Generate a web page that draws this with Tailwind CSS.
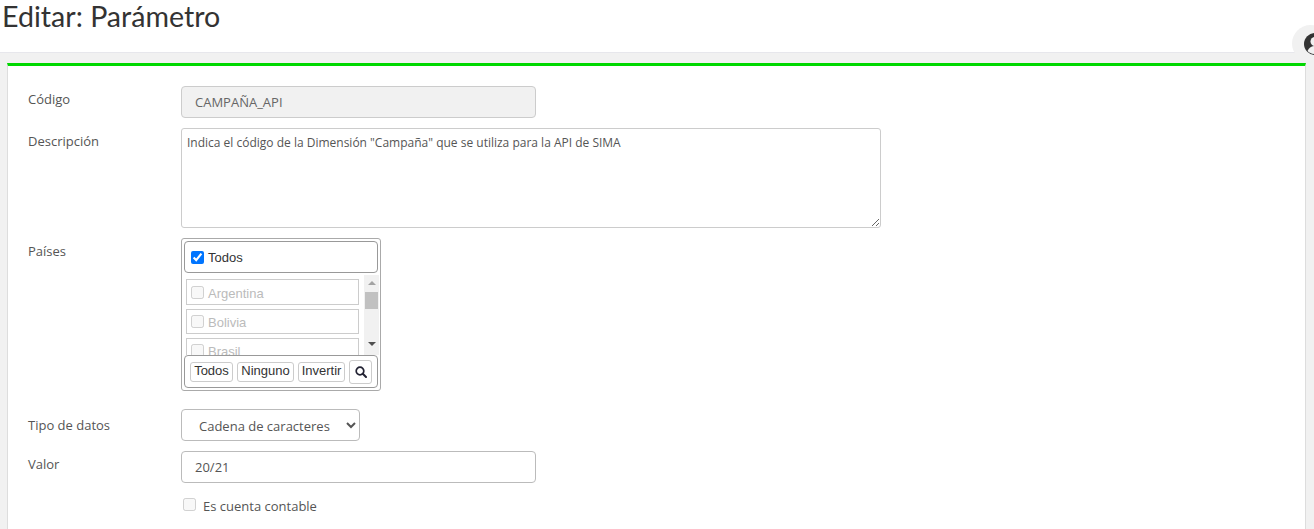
<!DOCTYPE html>
<html lang="es">
<head>
  <meta charset="UTF-8" />
  <title>Editar: Parámetro</title>
  <script src="https://cdn.jsdelivr.net/npm/@tailwindcss/browser@4"></script>
</head>
<body class="relative h-[529px] overflow-hidden bg-[#f1f1f1] font-['Open_Sans',sans-serif] text-[13px] text-[#555]">
  <!-- page title -->
  <header class="h-[53px] bg-white border-b border-[#e7e7ec] pl-[2px]">
    <h1 class="font-['Lato',sans-serif] text-[28.600px] leading-[32px] text-[#333]">Editar: Parámetro</h1>
  </header>

  <!-- user bubble -->
  <div class="absolute left-[1292px] top-[25px] w-[37px] h-[37px] rounded-full bg-[#f1f1f1] overflow-hidden">
    <svg class="absolute left-[12px] top-[8px] w-[22px] h-[22px]" viewBox="0 0 22 22">
      <circle cx="11" cy="11" r="11" fill="#333" />
      <circle cx="11" cy="8.5" r="4.5" fill="#f1f1f1" />
      <path d="M3.5 18c1.5-3.5 4-5 7.500-5s6 1.500 7.500 5c-2 2-4.500 3-7.500 3s-5.500-1-7.500-3z" fill="#f1f1f1" />
    </svg>
  </div>

  <main class="ml-[7px] mr-[8px] mt-[10px] h-[470px] bg-white border-x border-[#ddd] border-t-[3px] border-t-[#00d800] pl-[20px] pt-[20px]">
    <div class="flex h-[32px]">
      <label class="w-[153px] pt-[4px]">Código</label>
      <input type="text" disabled value="CAMPAÑA_API" class="w-[355px] h-[32px] px-[13px] text-[13px] text-[#666] bg-[#f1f1f1] border border-[#ccc] rounded-[4px]" />
    </div>

    <div class="flex mt-[10px] h-[100px]">
      <label class="w-[153px] pt-[4px]">Descripción</label>
      <textarea class="w-[700px] h-[100px] px-[5px] py-[5px] font-['Open_Sans',sans-serif] text-[12px] leading-[17px] text-[#555] border border-[#ccc] rounded-[3px]">Indica el código de la Dimensión "Campaña" que se utiliza para la API de SIMA</textarea>
    </div>

    <div class="flex mt-[10px]">
      <label class="w-[153px] pt-[4px]">Países</label>
      <div class="w-[200px] h-[153px] p-[2px] border border-[#aaa] rounded-[3px] font-['Liberation_Sans',sans-serif] text-[13px] text-[#333]">
        <div class="flex items-center h-[32px] pl-[6px] border border-[#999] rounded-[4px]">
          <input type="checkbox" checked class="w-[13px] h-[13px] accent-[#0075ff]" />
          <span class="ml-[4px] pt-[1px]">Todos</span>
        </div>
        <div class="flex h-[80px] mt-[2px]">
          <div class="w-[180px] h-[80px] shrink-0 overflow-hidden pl-[2px] pt-[4px] text-[#bbb]">
            <div class="flex items-center w-[173px] h-[26px] pl-[4px] border border-[#ccc]">
              <input type="checkbox" disabled class="w-[13px] h-[13px]" /><span class="ml-[4px] pt-[3px]">Argentina</span>
            </div>
            <div class="flex items-center w-[173px] h-[25px] mt-[4px] pl-[4px] border border-[#ccc]">
              <input type="checkbox" disabled class="w-[13px] h-[13px]" /><span class="ml-[4px] pt-[3px]">Bolivia</span>
            </div>
            <div class="flex items-center w-[173px] h-[25px] mt-[4px] pl-[4px] border border-[#ccc]">
              <input type="checkbox" disabled class="w-[13px] h-[13px]" /><span class="ml-[4px] pt-[2px]">Brasil</span>
            </div>
          </div>
          <!-- scrollbar -->
          <div class="relative w-[15px] shrink-0 h-[80px] bg-[#f1f1f1]">
            <div class="absolute left-[4px] top-[6px] w-0 h-0 border-x-[4px] border-x-transparent border-b-[4px] border-b-[#a3a3a3]"></div>
            <div class="absolute left-[1px] top-[17px] w-[13px] h-[17px] bg-[#c1c1c1]"></div>
            <div class="absolute left-[4px] top-[67px] w-0 h-0 border-x-[4px] border-x-transparent border-t-[4px] border-t-[#505050]"></div>
          </div>
        </div>
        <div class="relative flex items-center h-[33px] pl-[5px] gap-[4px] border border-[#999] rounded-[4px] bg-white">
          <button class="w-[43px] h-[20px] pb-[2px] leading-[16px] border border-[#ccc] rounded-[3px]">Todos</button>
          <button class="w-[57px] h-[20px] pb-[2px] leading-[16px] border border-[#ccc] rounded-[3px]">Ninguno</button>
          <button class="w-[47px] h-[20px] pb-[2px] leading-[16px] border border-[#ccc] rounded-[3px]">Invertir</button>
          <button class="flex items-center justify-center w-[23px] h-[24px] border border-[#ccc] rounded-[3px]">
            <svg class="w-[12px] h-[12px]" viewBox="0 0 12 12" fill="none" stroke="#223" stroke-width="1.700"><circle cx="5" cy="5" r="3.800" /><path d="M7.800 7.800 11 11" stroke-linecap="round" stroke-width="2" /></svg>
          </button>
        </div>
      </div>
    </div>

    <div class="flex mt-[18px] h-[32px]">
      <label class="w-[153px] pt-[7px]">Tipo de datos</label>
      <select class="w-[179px] h-[32px] pl-[13px] pt-[1px] text-[13px] text-[#555] bg-white border border-[#bbb] rounded-[4px]">
        <option>Cadena de caracteres</option>
      </select>
    </div>

    <div class="flex mt-[10px] h-[32px]">
      <label class="w-[153px] pt-[4px]">Valor</label>
      <input type="text" value="20/21" class="w-[355px] h-[32px] pl-[13px] text-[13px] text-[#555] border border-[#bbb] rounded-[4px]" />
    </div>

    <div class="flex items-start mt-[14px] ml-[155px] h-[20px]">
      <input type="checkbox" disabled class="mt-[1px] w-[13px] h-[13px]" />
      <span class="ml-[7px]">Es cuenta contable</span>
    </div>
  </main>
</body>
</html>
